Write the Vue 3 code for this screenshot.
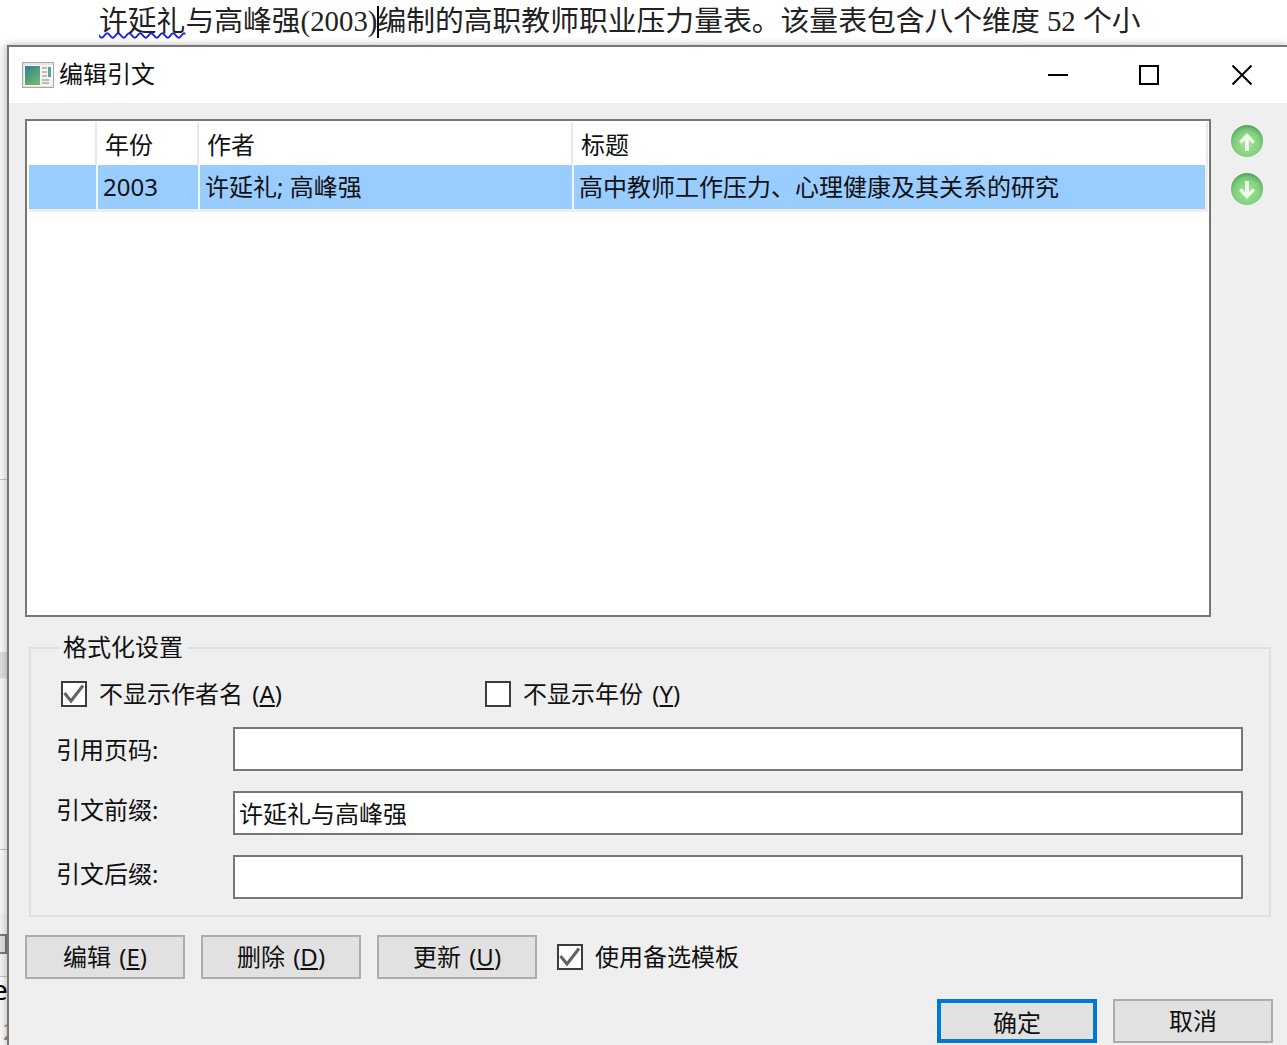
<script setup>
const columns = [
  { head: '', cell: '' },
  { head: '年份', cell: '2003' },
  { head: '作者', cell: '许延礼; 高峰强' },
  { head: '标题', cell: '高中教师工作压力、心理健康及其关系的研究' }
]
const fields = [
  { label: '引用页码:', value: '', cls: 'nudge-down' },
  { label: '引文前缀:', value: '许延礼与高峰强', cls: 'nudge-up' },
  { label: '引文后缀:', value: '', cls: 'nudge-up' }
]
const actions = [
  { text: '编辑', key: 'E' },
  { text: '删除', key: 'D' },
  { text: '更新', key: 'U' }
]
</script>

<template>
  <div class="page">
    <div class="doc-line">
      <span class="wavy">许延礼</span>与高峰强(2003)<span class="caret"></span>编制的高职教师职业压力量表。该量表包含八个维度 52 个小
    </div>
    <div class="lower">
      <div class="behind">
        <div class="seg s1"></div>
        <div class="seg s2"></div>
        <div class="seg s3"></div>
        <div class="seg s4"></div>
        <div class="seg s5"><span class="mini"></span></div>
        <div class="seg s6">e<span class="two">2</span></div>
      </div>
      <div class="dialog">
        <div class="titlebar">
          <svg class="app-icon" width="32" height="26" viewBox="0 0 32 26">
            <defs>
              <linearGradient id="pane" x1="0" y1="0" x2="0.6" y2="1">
                <stop offset="0" stop-color="#2f7f92" />
                <stop offset="1" stop-color="#6fb56f" />
              </linearGradient>
            </defs>
            <rect x="0.5" y="0.5" width="31" height="25" fill="#e6e6e6" stroke="#a8a8a8" />
            <rect x="2" y="3" width="29" height="21" fill="#f4f4f4" />
            <rect x="3" y="4" width="15" height="19" fill="url(#pane)" />
            <path d="M20 6h5M20 10h5M20 14h5M20 18h7M20 21h7" stroke="#a9a9a9" stroke-width="1.4" />
            <rect x="26" y="5" width="3" height="10" fill="#5f9f9a" />
          </svg>
          <span class="title">编辑引文</span>
          <div class="controls">
            <svg width="20" height="20" viewBox="0 0 20 20"><path d="M0 10h20" stroke="#000" stroke-width="2" /></svg>
            <svg width="20" height="20" viewBox="0 0 20 20"><rect x="1" y="1" width="18" height="18" fill="none" stroke="#000" stroke-width="2" /></svg>
            <svg class="close" width="20" height="20" viewBox="0 0 20 20"><path d="M0.5 0.5l19 19M19.500 0.5l-19 19" stroke="#000" stroke-width="2" /></svg>
          </div>
        </div>

        <div class="body">
          <div class="list-row">
            <div class="list">
              <div class="grid-head">
                <div v-for="c in columns" :key="c.head" class="hcell">{{ c.head }}</div>
              </div>
              <div class="grid-row">
                <div v-for="c in columns" :key="c.head" class="rcell">{{ c.cell }}</div>
              </div>
            </div>
            <div class="arrows">
              <svg width="32" height="32" viewBox="0 0 32 32">
                <defs>
                  <radialGradient id="ball" cx="0.5" cy="0.6" r="0.56">
                    <stop offset="0" stop-color="#a8e29c" />
                    <stop offset="0.68" stop-color="#82d27c" />
                    <stop offset="0.88" stop-color="#6cc070" />
                    <stop offset="1" stop-color="#58a860" />
                  </radialGradient>
                </defs>
                <circle cx="16" cy="16" r="16" fill="url(#ball)" />
                <path d="M16 8l8 8.500-2.500 2.200L18 15v11h-4V15l-3.500 3.700L8 16.500z" fill="#eefbe9" />
              </svg>
              <svg width="32" height="32" viewBox="0 0 32 32">
                <circle cx="16" cy="16" r="16" fill="url(#ball)" />
                <path d="M16 26l-8-8.500 2.500-2.200L14 19V8h4v11l3.500-3.700 2.500 2.200z" fill="#eefbe9" />
              </svg>
            </div>
          </div>

          <div class="group">
            <div class="legend">格式化设置</div>
            <div class="checks">
              <label class="check first">
                <span class="box">
                  <svg width="22" height="22" viewBox="0 0 22 22"><path d="M1.500 10L8 18 20 2.500" fill="none" stroke="#626262" stroke-width="3" /></svg>
                </span>
                <span>不显示作者名 (<u>A</u>)</span>
              </label>
              <label class="check">
                <span class="box"></span>
                <span>不显示年份 (<u>Y</u>)</span>
              </label>
            </div>
            <div v-for="f in fields" :key="f.label" class="field">
              <span class="field-label" :class="f.cls">{{ f.label }}</span>
              <input class="input" :value="f.value" readonly />
            </div>
          </div>

          <div class="actions">
            <button v-for="a in actions" :key="a.key" class="btn">{{ a.text }} (<u>{{ a.key }}</u>)</button>
            <label class="check alt">
              <span class="box">
                <svg width="22" height="22" viewBox="0 0 22 22"><path d="M1.500 10L8 18 20 2.500" fill="none" stroke="#626262" stroke-width="3" /></svg>
              </span>
              <span>使用备选模板</span>
            </label>
          </div>

          <div class="footer">
            <button class="btn primary">确定</button>
            <button class="btn">取消</button>
          </div>
        </div>
      </div>
    </div>
  </div>
</template>

<style scoped>
.page {
  width: 1287px;
  height: 1045px;
  overflow: hidden;
  background: #fff;
  font-family: "Noto Sans", "Noto Sans CJK SC", sans-serif;
  font-size: 24px;
  color: #111;
}
.doc-line {
  height: 45px;
  box-sizing: border-box;
  padding-left: 99px;
  font-family: "Liberation Serif", "Noto Sans CJK SC", serif;
  font-size: 28.8px;
  line-height: 43px;
  white-space: nowrap;
  color: #222;
}
.wavy {
  text-decoration: underline wavy #2020e0 1.5px;
  text-underline-offset: 1px;
}
.caret {
  display: inline-block;
  width: 0;
  height: 32px;
  border-left: 2px solid #000;
  margin: 0 -2px 0 0;
  vertical-align: -7px;
}
.lower {
  display: flex;
  height: 1000px;
}
.behind {
  width: 7px;
  flex: none;
  display: flex;
  flex-direction: column;
  background: #f6f6f6;
  overflow: hidden;
}
.seg { flex: none; box-sizing: border-box; }
.s1 { height: 435px; border-bottom: 1px solid #bdbdbd; }
.s2 { height: 172px; }
.s3 { height: 26px; background: #dcdcdc; }
.s4 { height: 172px; border-top: 1px solid #ececec; border-bottom: 1px solid #bdbdbd; }
.s5 { height: 127px; background: #f0f0f0; border-top: 63px solid #f6f6f6; border-bottom: 1px solid #bdbdbd; }
.mini {
  display: block;
  width: 7px;
  height: 20px;
  margin-top: 21px;
  box-sizing: border-box;
  background: #ddd;
  border: 2px solid #777;
  border-left: 0;
}
.s6 {
  height: 68px;
  margin-left: -8px;
  font-size: 28px;
  line-height: 24px;
  color: #000;
  white-space: nowrap;
}
.two {
  display: block;
  margin: 18px 0 0 11px;
  font-size: 22px;
  color: #a98a66;
}
.dialog {
  width: 1280px;
  flex: none;
  box-sizing: border-box;
  border-top: 2px solid #777;
  border-left: 2px solid #777;
  box-shadow: 0 0 7px rgba(0, 0, 0, 0.3);
  background: #efefef;
  position: relative;
}
.titlebar {
  height: 56px;
  background: #fff;
  display: flex;
  align-items: center;
  padding-left: 13px;
}
.app-icon { flex: none; }
.title {
  margin: -2px 0 0 5px;
  line-height: 32px;
}
.controls {
  margin-left: auto;
  display: flex;
  gap: 71px;
  width: 224px;
  padding-right: 15px;
  box-sizing: content-box;
}
.controls svg { flex: none; }
.controls .close { margin-left: 2px; }
.body {
  padding: 16px 0 0 16px;
}
.list-row {
  display: flex;
}
.list {
  width: 1186px;
  height: 498px;
  box-sizing: border-box;
  border: 2px solid #777;
  background: #fff;
  padding: 1px 1px 0 2px;
}
.grid-head {
  display: grid;
  grid-template-columns: 68px 102px 374px 1fr;
  height: 43px;
}
.grid-row {
  display: grid;
  grid-template-columns: 69px 102px 374px 1fr;
  height: 47px;
}
.hcell {
  border-right: 2px solid #e8e8e8;
  border-bottom: 2px solid #ccc;
  padding-left: 8px;
  line-height: 46px;
  white-space: nowrap;
}
.rcell {
  background: #99ccff;
  border-right: 2px solid #eef5fb;
  border-bottom: 3px solid #eeeeee;
  padding-left: 5px;
  line-height: 44px;
  white-space: nowrap;
}
.rcell:last-child { border-right: 3px solid #eeeeee; }
.arrows {
  display: flex;
  flex-direction: column;
  gap: 16px;
  margin: 6px 0 0 20px;
}
.group {
  width: 1242px;
  height: 270px;
  box-sizing: border-box;
  margin: 30px 0 0 4px;
  border: 2px solid #dfdfdf;
  padding: 0 26px;
}
.legend {
  width: max-content;
  height: 32px;
  margin: -18px 0 0 2px;
  padding: 0 4px;
  background: #efefef;
  line-height: 32px;
}
.checks {
  display: flex;
  margin: 18px 0 0 4px;
  height: 26px;
}
.check {
  display: flex;
  align-items: center;
  gap: 12px;
  line-height: 26px;
  white-space: nowrap;
  word-spacing: 3px;
}
.first { width: 424px; }
.box {
  width: 26px;
  height: 26px;
  flex: none;
  box-sizing: border-box;
  border: 2px solid #3c3c3c;
  background: #fff;
  display: block;
}
.box svg { display: block; }
.field {
  display: flex;
  align-items: center;
  height: 44px;
  margin-top: 20px;
}
.field-label {
  width: 177px;
  margin-left: -1px;
  flex: none;
  line-height: 32px;
}
.nudge-down { padding-top: 2px; }
.nudge-up { padding-bottom: 6px; }
.input {
  width: 1010px;
  height: 44px;
  box-sizing: border-box;
  border: 2px solid #777;
  border-radius: 0;
  outline: none;
  background: #fff;
  padding: 0 4px 2px;
  font: inherit;
  color: inherit;
}
.actions {
  display: flex;
  align-items: center;
  gap: 16px;
  margin-top: 18px;
}
.btn {
  width: 160px;
  height: 44px;
  flex: none;
  box-sizing: border-box;
  border: 2px solid #adadad;
  border-radius: 0;
  background: #e1e1e1;
  padding: 0;
  font: inherit;
  color: inherit;
  line-height: 40px;
  word-spacing: 2px;
}
.alt { margin-left: 4px; }
.footer {
  display: flex;
  justify-content: flex-end;
  gap: 16px;
  margin-top: 20px;
  padding-right: 14px;
}
.primary {
  border: 4px solid #0078d7;
  padding-bottom: 2px;
}
</style>

<style>
html, body { margin: 0; background: #fff; }
</style>
